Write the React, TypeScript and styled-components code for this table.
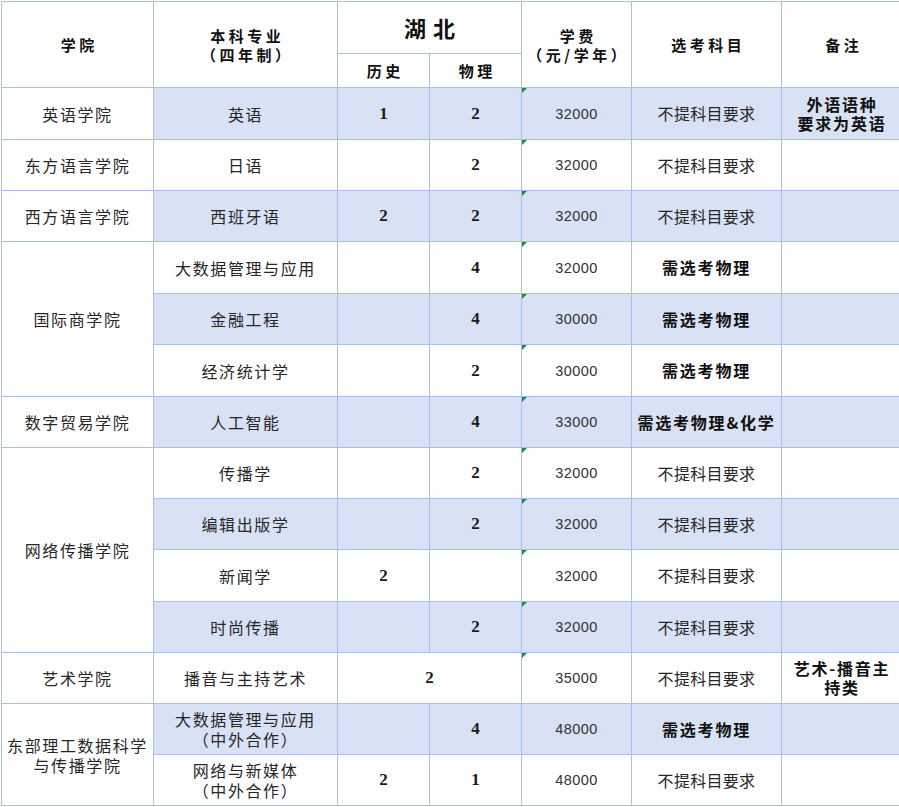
import { FC, Fragment } from 'react';
import styled, { createGlobalStyle, css } from 'styled-components';

const GlobalStyle = createGlobalStyle`
  html, body {
    margin: 0;
    padding: 0;
    background: #ffffff;
  }
  body {
    font-family: 'Noto Sans CJK SC', 'Noto Sans', sans-serif;
    color: #222;
    overflow: hidden;
  }
`;

const LINE = '#a8bfee';
const SHADE = '#d9e1f4';

// row heights measured off the sheet, header first
const ROWS = '51px 33px 51px 50px 50px 51px 50px 51px 50px 50px 50px 51px 50px 50px 50px 50px';

const Sheet = styled.div`
  display: grid;
  grid-template-columns: 151px 183px 91px 91px 109px 149px 120px;
  grid-template-rows: ${ROWS};
  gap: 1px;
  padding: 1px;
  margin: 1px 0 0 1px;
  width: max-content;
  background: ${LINE};
`;

type CellProps = {
  $shade?: boolean;
  $rows?: number;
  $cols?: number;
  $flag?: boolean;
};

const Cell = styled.div<CellProps>`
  position: relative;
  display: flex;
  align-items: center;
  justify-content: center;
  text-align: center;
  white-space: pre-line;
  background: ${(p) => (p.$shade ? SHADE : '#ffffff')};
  ${(p) => p.$rows && css`grid-row: span ${p.$rows};`}
  ${(p) => p.$cols && css`grid-column: span ${p.$cols};`}
  ${(p) =>
    p.$flag &&
    css`
      &::before {
        content: '';
        position: absolute;
        left: 0;
        top: 0;
        border-top: 5px solid #1f8a3b;
        border-right: 5px solid transparent;
      }
    `}
`;

const HeadText = styled.span<{ $big?: boolean }>`
  font-weight: 700;
  color: #111;
  font-size: ${(p) => (p.$big ? '22px' : '15px')};
  letter-spacing: ${(p) => (p.$big ? '7px' : '3.5px')};
  padding-left: ${(p) => (p.$big ? '7px' : '3.5px')};
  line-height: 19px;
`;

const NameText = styled.span`
  font-size: 16px;
  letter-spacing: 1.6px;
  line-height: 20px;
  color: #262626;
`;

const Score = styled.span`
  font-family: 'Liberation Serif', 'DejaVu Serif', serif;
  font-weight: 700;
  font-size: 17px;
  color: #1a1a1a;
`;

const Fee = styled.span`
  font-family: 'Liberation Sans', Arial, sans-serif;
  font-size: 14.5px;
  letter-spacing: 0.4px;
  color: #333;
`;

const Rule = styled.span<{ $bold?: boolean }>`
  font-size: 16px;
  line-height: 19px;
  font-weight: ${(p) => (p.$bold ? 700 : 400)};
  letter-spacing: ${(p) => (p.$bold ? '1.8px' : '0.3px')};
  color: ${(p) => (p.$bold ? '#111' : '#262626')};
  white-space: pre-line;
`;

type Row = {
  major: string;
  history: string;
  physics: string;
  merged?: string;
  fee: string;
  rule: string;
  note: string;
};

type Group = { college: string; rows: Row[] };

const PLAIN = '不提科目要求';
const PHYS = '需选考物理';

const groups: Group[] = [
  {
    college: '英语学院',
    rows: [{ major: '英语', history: '1', physics: '2', fee: '32000', rule: PLAIN, note: '外语语种\n要求为英语' }],
  },
  {
    college: '东方语言学院',
    rows: [{ major: '日语', history: '', physics: '2', fee: '32000', rule: PLAIN, note: '' }],
  },
  {
    college: '西方语言学院',
    rows: [{ major: '西班牙语', history: '2', physics: '2', fee: '32000', rule: PLAIN, note: '' }],
  },
  {
    college: '国际商学院',
    rows: [
      { major: '大数据管理与应用', history: '', physics: '4', fee: '32000', rule: PHYS, note: '' },
      { major: '金融工程', history: '', physics: '4', fee: '30000', rule: PHYS, note: '' },
      { major: '经济统计学', history: '', physics: '2', fee: '30000', rule: PHYS, note: '' },
    ],
  },
  {
    college: '数字贸易学院',
    rows: [{ major: '人工智能', history: '', physics: '4', fee: '33000', rule: '需选考物理&化学', note: '' }],
  },
  {
    college: '网络传播学院',
    rows: [
      { major: '传播学', history: '', physics: '2', fee: '32000', rule: PLAIN, note: '' },
      { major: '编辑出版学', history: '', physics: '2', fee: '32000', rule: PLAIN, note: '' },
      { major: '新闻学', history: '2', physics: '', fee: '32000', rule: PLAIN, note: '' },
      { major: '时尚传播', history: '', physics: '2', fee: '32000', rule: PLAIN, note: '' },
    ],
  },
  {
    college: '艺术学院',
    rows: [
      { major: '播音与主持艺术', history: '', physics: '', merged: '2', fee: '35000', rule: PLAIN, note: '艺术-播音主\n持类' },
    ],
  },
  {
    college: '东部理工数据科学\n与传播学院',
    rows: [
      { major: '大数据管理与应用\n（中外合作）', history: '', physics: '4', fee: '48000', rule: PHYS, note: '' },
      { major: '网络与新媒体\n（中外合作）', history: '2', physics: '1', fee: '48000', rule: PLAIN, note: '' },
    ],
  },
];

const Header: FC = () => (
  <>
    <Cell $rows={2}>
      <HeadText>学院</HeadText>
    </Cell>
    <Cell $rows={2}>
      <HeadText>{'本科专业\n（四年制）'}</HeadText>
    </Cell>
    <Cell $cols={2}>
      <HeadText $big>湖北</HeadText>
    </Cell>
    <Cell $rows={2}>
      <HeadText>{'学费\n（元/学年）'}</HeadText>
    </Cell>
    <Cell $rows={2}>
      <HeadText>选考科目</HeadText>
    </Cell>
    <Cell $rows={2}>
      <HeadText>备注</HeadText>
    </Cell>
    <Cell>
      <HeadText>历史</HeadText>
    </Cell>
    <Cell>
      <HeadText>物理</HeadText>
    </Cell>
  </>
);

export default function App() {
  let index = 0;
  return (
    <>
      <GlobalStyle />
      <Sheet>
        <Header />
        {groups.map((group) => (
          <Fragment key={group.college}>
            <Cell $rows={group.rows.length}>
              <NameText>{group.college}</NameText>
            </Cell>
            {group.rows.map((row) => {
              index += 1;
              const shade = index % 2 === 1;
              return (
                <Fragment key={row.major}>
                  <Cell $shade={shade}>
                    <NameText>{row.major}</NameText>
                  </Cell>
                  {row.merged ? (
                    <Cell $shade={shade} $cols={2}>
                      <Score>{row.merged}</Score>
                    </Cell>
                  ) : (
                    <>
                      <Cell $shade={shade}>
                        <Score>{row.history}</Score>
                      </Cell>
                      <Cell $shade={shade}>
                        <Score>{row.physics}</Score>
                      </Cell>
                    </>
                  )}
                  <Cell $shade={shade} $flag={index <= 12}>
                    <Fee>{row.fee}</Fee>
                  </Cell>
                  <Cell $shade={shade}>
                    <Rule $bold={row.rule !== PLAIN}>{row.rule}</Rule>
                  </Cell>
                  <Cell $shade={shade}>
                    <Rule $bold>{row.note}</Rule>
                  </Cell>
                </Fragment>
              );
            })}
          </Fragment>
        ))}
      </Sheet>
    </>
  );
}
